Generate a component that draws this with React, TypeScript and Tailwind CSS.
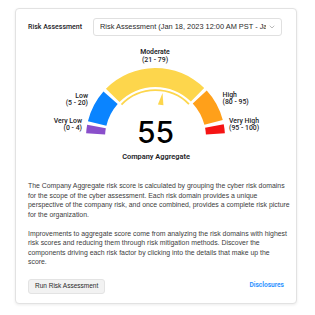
import { ChevronDown } from 'lucide-react'

const CX = 155.5
const CY = 137.5

// point on the gauge, angle measured from the left end, clockwise over the top
const pt = (a: number, r: number) => {
  const t = (a * Math.PI) / 180
  return [CX - r * Math.cos(t), CY - r * Math.sin(t)]
}

const band = (a1: number, a2: number, rIn: number, rOut: number) => {
  const [x1, y1] = pt(a1, rOut)
  const [x2, y2] = pt(a2, rOut)
  const [x3, y3] = pt(a2, rIn)
  const [x4, y4] = pt(a1, rIn)
  const large = a2 - a1 > 180 ? 1 : 0
  return `M${x1} ${y1} A${rOut} ${rOut} 0 ${large} 1 ${x2} ${y2} L${x3} ${y3} A${rIn} ${rIn} 0 ${large} 0 ${x4} ${y4} Z`
}

const line = (a1: number, a2: number, r: number) => {
  const [x1, y1] = pt(a1, r)
  const [x2, y2] = pt(a2, r)
  return `M${x1} ${y1} A${r} ${r} 0 0 1 ${x2} ${y2}`
}

const segments = [
  { from: 3.5, to: 10.5, color: '#8a4fcb' },
  { from: 13.5, to: 41.5, color: '#0a84ff' },
  { from: 44.5, to: 134.5, color: '#fdd64c' },
  { from: 137.5, to: 165.5, color: '#ffa01a' },
  { from: 169, to: 176.5, color: '#f51414' },
]

const score = 55

function Needle() {
  const a = (score / 100) * 180
  const t = (a * Math.PI) / 180
  const [tx, ty] = pt(a, 45)
  const [bx, by] = pt(a, 33)
  const px = Math.sin(t) * 2.8
  const py = -Math.cos(t) * 2.8
  return <polygon points={`${tx},${ty} ${bx + px},${by + py} ${bx - px},${by - py}`} fill="#fdd64c" />
}

function Gauge() {
  const label = "fill-[#1d1d1f] text-[6.9px] font-medium font-['Roboto',sans-serif]"
  return (
    <svg width="256" height="109" viewBox="28 42 256 109" className="block">
      {segments.map((s) => (
        <path key={s.from} d={band(s.from, s.to, 50.5, 69.5)} fill={s.color} />
      ))}
      <path d={line(44, 135, 47.3)} stroke="#fdd64c" strokeWidth="1.8" fill="none" />
      <Needle />

      <text x="155" y="52" textAnchor="middle" dominantBaseline="central" className="fill-[#1d1d1f] text-[6.9px] font-semibold font-['Roboto',sans-serif]">
        Moderate
      </text>
      <text x="155" y="59.5" textAnchor="middle" dominantBaseline="central" className={label}>
        (21 - 79)
      </text>

      <text x="88" y="95.5" textAnchor="end" dominantBaseline="central" className={label}>
        Low
      </text>
      <text x="88" y="102.5" textAnchor="end" dominantBaseline="central" className={label}>
        (5 - 20)
      </text>

      <text x="82" y="121" textAnchor="end" dominantBaseline="central" className={label}>
        Very Low
      </text>
      <text x="82" y="128" textAnchor="end" dominantBaseline="central" className={label}>
        (0 - 4)
      </text>

      <text x="222.5" y="94.5" dominantBaseline="central" className={label}>
        High
      </text>
      <text x="222.5" y="101.5" dominantBaseline="central" className={label}>
        (80 - 95)
      </text>

      <text x="229" y="120.5" dominantBaseline="central" className={label}>
        Very High
      </text>
      <text x="229" y="127.5" dominantBaseline="central" className={label}>
        (95 - 100)
      </text>

      <text x="155.5" y="143.3" textAnchor="middle" className="fill-black text-[30px] font-medium font-['Inter',sans-serif]">
        {score}
      </text>
    </svg>
  )
}

export default function App() {
  return (
    <div className="min-h-screen bg-white pt-[8px] pl-[15px] font-['Liberation_Sans',Arial,sans-serif]">
      <div className="w-[282px] rounded-[4px] border border-[#e2e2e2] bg-white pl-[12px] pr-[5.5px] pt-[9px] pb-[9px] shadow-[0_1px_3px_rgba(0,0,0,0.08)]">
        {/* Header */}
        <div className="flex items-center">
          <span className="w-[65px] shrink-0 font-['Roboto',sans-serif] text-[7px] font-medium text-[#1d1d1f]">
            Risk Assessment
          </span>
          <div className="flex h-[18px] w-[189px] items-center rounded-[3px] border border-[#e0e0e0] pl-[6px] pr-[5px]">
            <span className="flex-1 overflow-hidden whitespace-nowrap text-[7.4px] text-[#2a2a2a]">
              Risk Assessment (Jan 18, 2023 12:00 AM PST - Jan 18, 2024 12:00 AM PST)
            </span>
            <ChevronDown size={8} strokeWidth={1.5} className="ml-[2px] shrink-0 text-[#777]" />
          </div>
        </div>

        {/* Gauge */}
        <div className="mt-[6px]">
          <Gauge />
        </div>
        <div className="w-[256px] text-center font-['Roboto',sans-serif] text-[7.4px] leading-[12px] font-semibold text-[#1d1d1f]">
          Company Aggregate
        </div>

        {/* Description */}
        <div className="mt-[18px] text-[6.9px] leading-[9.5px] text-[#3c3c3c]">
          <p>
            The Company Aggregate risk score is calculated by grouping the cyber risk domains for the scope of the cyber
            assessment. Each risk domain provides a unique perspective of the company risk, and once combined, provides a
            complete risk picture for the organization.
          </p>
          <p className="mt-[9.5px]">
            Improvements to aggregate score come from analyzing the risk domains with highest risk scores and reducing them
            through risk mitigation methods. Discover the components driving each risk factor by clicking into the details
            that make up the
            <br />
            score.
          </p>
        </div>

        {/* Footer */}
        <div className="mt-[12px] flex items-center justify-between pr-[6.5px]">
          <button className="h-[15px] rounded-[3px] border border-[#e3e3e3] bg-[#f2f2f2] px-[6px] text-[6.5px] text-[#2a2a2a]">
            Run Risk Assessment
          </button>
          <span className="font-['Roboto',sans-serif] text-[6.6px] font-semibold text-[#1a8cff]">Disclosures</span>
        </div>
      </div>
    </div>
  )
}
